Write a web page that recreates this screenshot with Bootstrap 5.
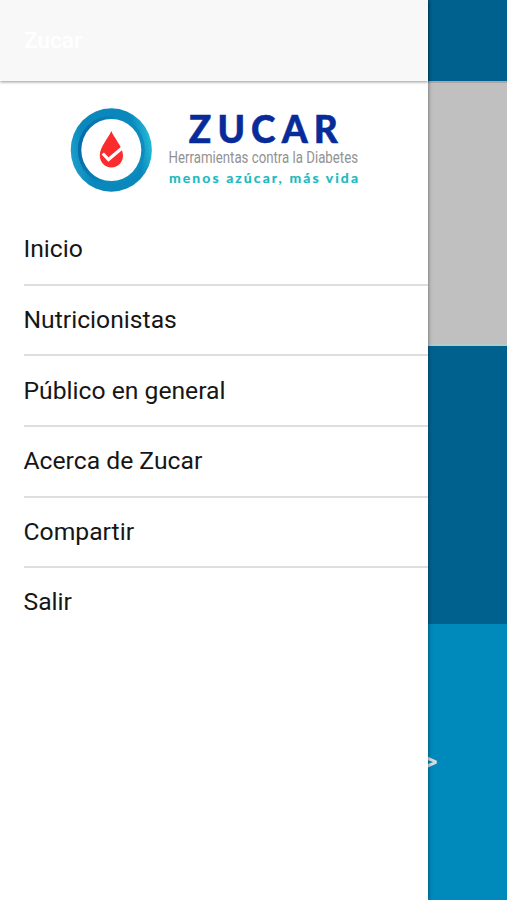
<!DOCTYPE html>
<html lang="es">
<head>
<meta charset="utf-8">
<meta name="viewport" content="width=device-width, initial-scale=1">
<title>Zucar</title>
<link href="https://cdn.jsdelivr.net/npm/bootstrap@5.3.0/dist/css/bootstrap.min.css" rel="stylesheet">
<style>
body { font-family: Roboto, "Liberation Sans", sans-serif; background: #fff; }
.app { height: 900px; }
.drawer { width: 428px; box-shadow: 0 0 4px rgba(0,0,0,.5); z-index: 2; }
.drawer-head { height: 81px; padding: 0 24px; background: #f8f8f8; box-shadow: 0 1px 3px rgba(0,0,0,.42); color: #fff; font-size: 22.6px; font-weight: 500; }
.brand { height: 134.2px; }
.menu { margin-left: 23.5px; }
.menu .list-group-item { height: 70.6px; padding: 0; border: 0; border-bottom: 2px solid #dedede; border-radius: 0; background: none; color: #161616; font-size: 24.7px; line-height: 30px; }
.menu .list-group-item:last-child { padding-bottom: 2px; border-bottom: 0; }
.behind-bar { height: 81px; background: #00618f; }
.behind-photo { height: 265px; background: #c0c0c0; border-top: 2px solid #aaa6a5; border-bottom: 2px solid #b5cbcb; }
.behind-dark { height: 277.5px; background: #00618f; }
.behind-light { background: #0089bb; }
.next { height: 275px; margin-left: -3.5px; color: #d3dde2; font-size: 25px; font-weight: 700; line-height: 1; }
</style>
<script src="https://cdn.jsdelivr.net/npm/bootstrap@5.3.0/dist/js/bootstrap.bundle.min.js"></script>
</head>
<body>
<div class="app d-flex overflow-hidden">
  <aside class="drawer bg-white flex-shrink-0 position-relative">
    <header class="drawer-head d-flex align-items-center">Zucar</header>
    <div class="brand">
      <svg class="d-block" width="428" height="133" viewBox="0 81 428 133" role="img" aria-label="Zucar">
        <defs>
          <linearGradient id="ring" x1="0" x2="1" y1="0.6" y2="0.4">
            <stop offset="0" stop-color="#1d9fc9"/><stop offset=".2" stop-color="#0a88bc"/><stop offset=".8" stop-color="#0a88bc"/><stop offset="1" stop-color="#27bcd6"/>
          </linearGradient>
          <linearGradient id="inner" x1="0" x2="1" y1="0.4" y2="0.6">
            <stop offset="0" stop-color="#066aaa"/><stop offset=".5" stop-color="#0a88bc"/><stop offset="1" stop-color="#0c8cc0"/>
          </linearGradient>
        </defs>
        <ellipse cx="111.3" cy="150" rx="40.6" ry="41.8" fill="url(#ring)"/>
        <ellipse cx="111.3" cy="150" rx="33.5" ry="34.5" fill="url(#inner)"/>
        <ellipse cx="111.3" cy="150" rx="30" ry="31" fill="#fff"/>
        <path d="M111.3 131C108.500 138 99.800 147 99.800 155.500C99.800 162.500 105 167.400 111.400 167.400C118 167.400 123 162.500 123 155.500C123 147 114 138 111.300 131Z" fill="#fb2b2e"/>
        <path d="M102.800 153.500L108.500 159.500L124.500 146" fill="none" stroke="#fff" stroke-width="3.200"/>
        <g font-family="Lato, sans-serif">
          <text x="188.800" y="142.500" font-size="37" font-weight="900" fill="#082b9a" stroke="#082b9a" stroke-width=".5" textLength="149" lengthAdjust="spacing">ZUCAR</text>
          <text x="169" y="183.200" font-size="14" font-weight="700" fill="#1abac0" stroke="#1abac0" stroke-width=".2" textLength="189" lengthAdjust="spacing">menos azúcar, más vida</text>
        </g>
        <text x="168.500" y="163" font-family="Roboto, sans-serif" font-size="17" fill="#929292" textLength="189.500" lengthAdjust="spacingAndGlyphs">Herramientas contra la Diabetes</text>
      </svg>
    </div>
    <nav class="menu list-group">
      <a class="list-group-item d-flex align-items-center" href="#">Inicio</a>
      <a class="list-group-item d-flex align-items-center" href="#">Nutricionistas</a>
      <a class="list-group-item d-flex align-items-center" href="#">Público en general</a>
      <a class="list-group-item d-flex align-items-center" href="#">Acerca de Zucar</a>
      <a class="list-group-item d-flex align-items-center" href="#">Compartir</a>
      <a class="list-group-item d-flex align-items-center" href="#">Salir</a>
    </nav>
  </aside>
  <main class="flex-grow-1 d-flex flex-column overflow-hidden">
    <div class="behind-bar"></div>
    <div class="behind-photo"></div>
    <div class="behind-dark"></div>
    <div class="behind-light flex-grow-1">
      <div class="next d-flex align-items-center">&gt;</div>
    </div>
  </main>
</div>
</body>
</html>
